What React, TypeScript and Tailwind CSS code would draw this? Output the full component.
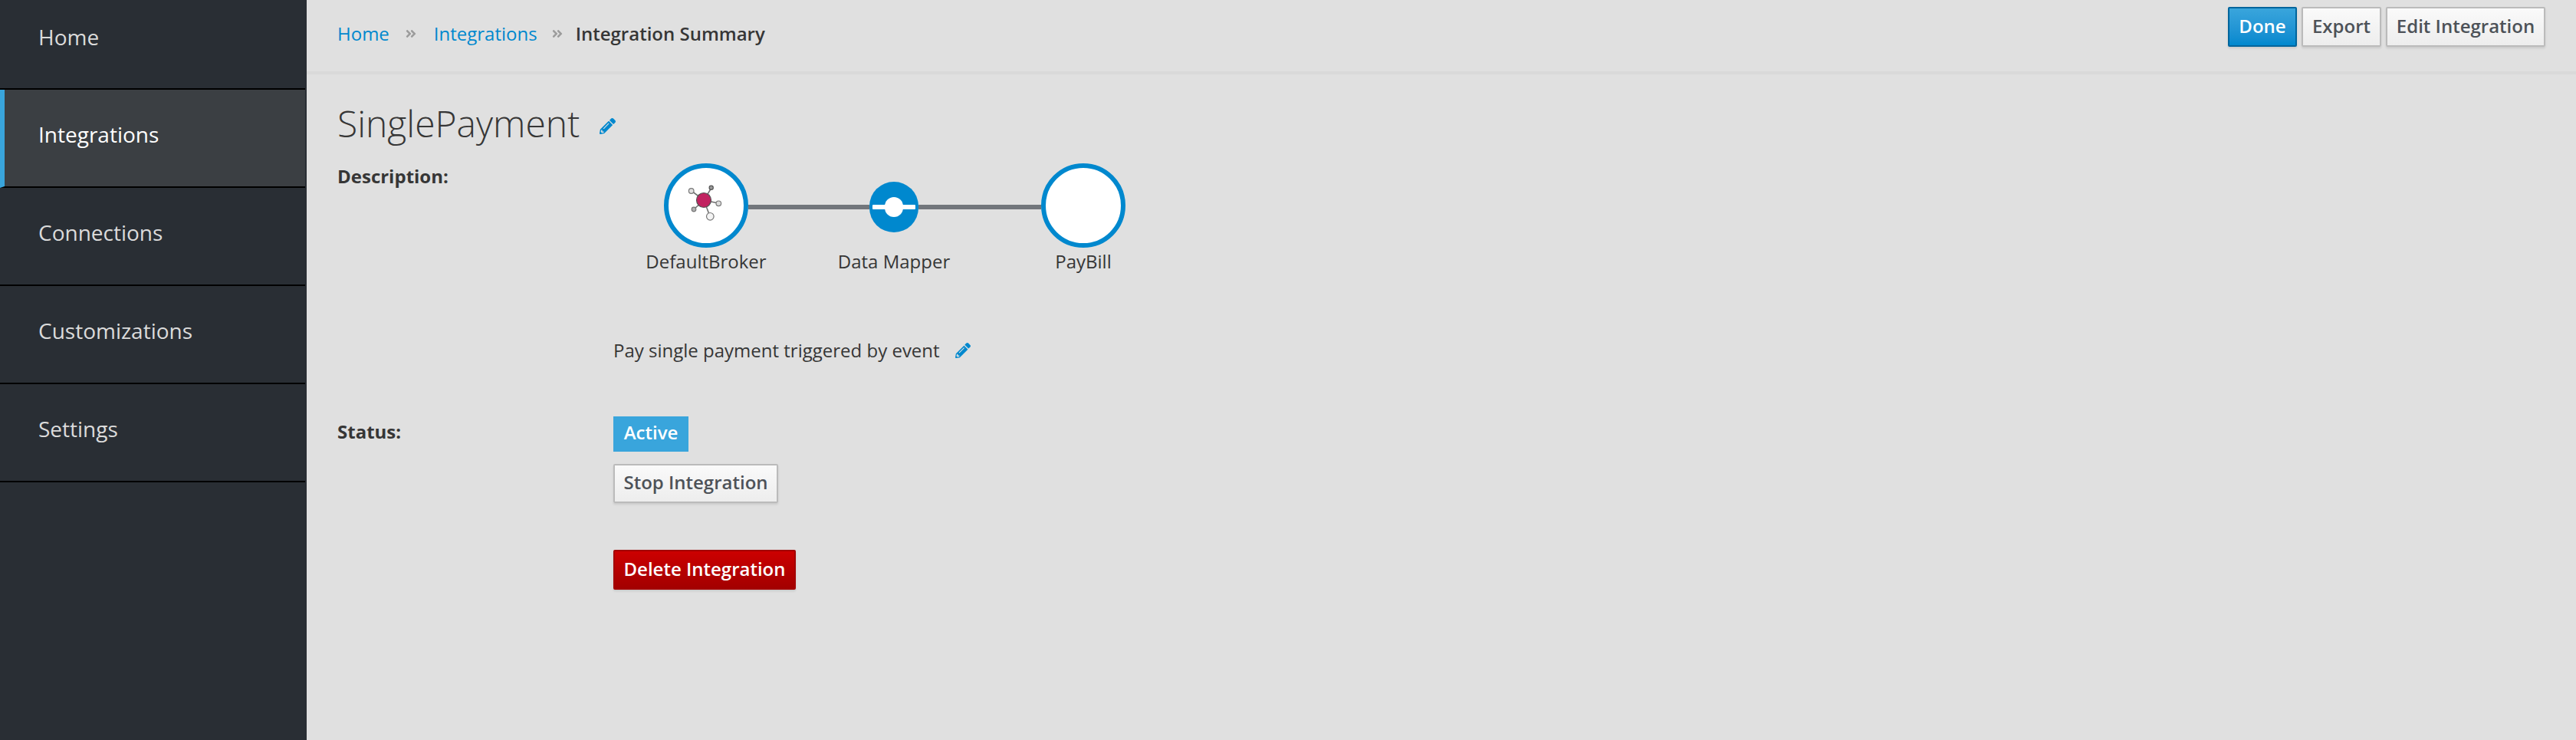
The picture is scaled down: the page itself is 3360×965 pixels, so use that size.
import { FaAngleDoubleRight, FaPencilAlt } from 'react-icons/fa'

const navItems = ['Home', 'Integrations', 'Connections', 'Customizations', 'Settings']

const defaultBtn =
  'rounded-[2px] border-2 border-[#bbbbbb] bg-gradient-to-b from-[#fafafa] to-[#ededed] pb-[3px] text-[#4d5258] shadow-[0_2px_3px_rgba(3,3,3,0.1)]'

function Sidebar() {
  return (
    <aside className="w-[400px] shrink-0 bg-[#292e34] pr-[2px]">
      {navItems.map((item, i) => {
        const active = item === 'Integrations'
        return (
          <div
            key={item}
            className={`flex items-center border-b-2 border-black text-[28px] ${
              i === 0 ? 'h-[117px] pb-[20px]' : 'h-[128px] pb-[10px]'
            } ${
              active
                ? 'border-l-[6px] border-l-[#39a5dc] bg-[#3b3f43] pl-[44px] text-white'
                : 'pl-[50px] text-[#dbdbdb]'
            }`}
          >
            {item}
          </div>
        )
      })}
    </aside>
  )
}

function Breadcrumbs() {
  return (
    <nav className="flex items-center text-[24px]">
      <span className="text-[#0088ce]">Home</span>
      <FaAngleDoubleRight className="ml-[21px] mr-[23px] h-[16px] w-[14px] text-[#9c9c9c]" />
      <span className="text-[#0088ce]">Integrations</span>
      <FaAngleDoubleRight className="ml-[19px] mr-[17px] h-[16px] w-[14px] text-[#9c9c9c]" />
      <span className="font-semibold text-[#363636]">Integration Summary</span>
    </nav>
  )
}

function Molecule() {
  return (
    <svg viewBox="0 0 98 98" className="h-[98px] w-[98px]">
      <g stroke="#6f6f6f" strokeWidth="1.6">
        <line x1="46" y1="42" x2="30" y2="30" />
        <line x1="46" y1="42" x2="56" y2="26" />
        <line x1="46" y1="42" x2="65" y2="46" />
        <line x1="46" y1="42" x2="33" y2="54" />
        <line x1="46" y1="42" x2="54" y2="63" />
      </g>
      <circle cx="29.7" cy="30" r="3.3" fill="#e0e0e0" stroke="#777777" strokeWidth="1.2" />
      <circle cx="55.7" cy="25.7" r="2.6" fill="#9a9a9a" stroke="#555555" strokeWidth="1.2" />
      <circle cx="65.3" cy="46.3" r="3.3" fill="#dddddd" stroke="#777777" strokeWidth="1.2" />
      <circle cx="33" cy="54" r="2.8" fill="#b0b0b0" stroke="#777777" strokeWidth="1.2" />
      <circle cx="54.3" cy="63.3" r="4.8" fill="#f4f4f4" stroke="#777777" strokeWidth="1.2" />
      <circle cx="46" cy="42" r="9.5" fill="#c12260" stroke="#555555" strokeWidth="1.2" />
    </svg>
  )
}

function Flow() {
  const bigCircle =
    'flex h-[110px] w-[110px] items-center justify-center rounded-full border-[6px] border-[#0088ce] bg-white'
  const label = 'mt-[2px] w-max justify-self-center text-[24px] leading-[32px] text-[#363636]'
  return (
    <div className="ml-[66px] grid grid-cols-[110px_158px_64px_160px_110px] items-center">
      <div className={bigCircle}>
        <Molecule />
      </div>
      <div className="mt-[4px] h-[6px] bg-[#72767b]" />
      <div className="relative mt-[4px] flex h-[66px] w-[64px] items-center justify-center rounded-full bg-[#0088ce]">
        <div className="absolute h-[6px] w-[56px] rounded-[1px] bg-white" />
        <div className="h-[26px] w-[24px] rounded-full bg-white" />
      </div>
      <div className="mt-[4px] h-[6px] bg-[#72767b]" />
      <div className={bigCircle} />
      <div className={label}>DefaultBroker</div>
      <div />
      <div className={label}>Data Mapper</div>
      <div />
      <div className={label}>PayBill</div>
    </div>
  )
}

export default function App() {
  return (
    <div
      className="flex min-h-[965px] bg-[#e0e0e0]"
      style={{ fontFamily: '"Open Sans", "Noto Sans", sans-serif' }}
    >
      <Sidebar />
      <main className="min-w-0 flex-1">
        <header className="flex h-[97px] items-start justify-between border-b-4 border-[#d9d9d9] pl-[40px] pr-[40px]">
          <div className="flex h-[88px] items-center">
            <Breadcrumbs />
          </div>
          <div className="mt-[9px] flex gap-[6px] text-[24px] font-semibold">
            <button
              type="button"
              className="h-[52px] w-[90px] rounded-[2px] border-2 border-[#00659c] bg-gradient-to-b from-[#39a5dc] to-[#0088ce] pb-[3px] text-white shadow-[0_2px_3px_rgba(3,3,3,0.1)]"
            >
              Done
            </button>
            <button type="button" className={`h-[52px] w-[104px] ${defaultBtn}`}>
              Export
            </button>
            <button type="button" className={`h-[52px] w-[208px] ${defaultBtn}`}>
              Edit Integration
            </button>
          </div>
        </header>

        <div className="pl-[40px]">
          <div className="mt-[32px] flex h-[64px] items-center">
            <h1 className="text-[48px] font-light text-[#363636]">SinglePayment</h1>
            <FaPencilAlt className="ml-[26px] mt-[6px] h-[21px] w-[21px] text-[#0088ce]" />
          </div>

          <div className="mt-[3px] flex">
            <div className="w-[360px] shrink-0 pt-[18px] text-[24px] font-bold leading-[32px] text-[#363636]">
              Description:
            </div>
            <div>
              <div className="pt-[17px]">
                <Flow />
              </div>
              <div className="mt-[84px] flex h-[32px] items-center text-[24px] text-[#363636]">
                Pay single payment triggered by event
                <FaPencilAlt className="ml-[20px] h-[20px] w-[20px] text-[#0088ce]" />
              </div>
            </div>
          </div>

          <div className="mt-[70px] flex">
            <div className="flex h-[46px] w-[360px] shrink-0 items-center pb-[6px] text-[24px] font-bold text-[#363636]">
              Status:
            </div>
            <div className="flex flex-col items-start text-[24px] font-semibold">
              <span className="flex h-[46px] w-[98px] items-center justify-center bg-[#39a5dc] pb-[5px] text-white">
                Active
              </span>
              <button type="button" className={`mt-[16px] h-[51px] w-[215px] ${defaultBtn}`}>
                Stop Integration
              </button>
              <button
                type="button"
                className="mt-[61px] h-[52px] w-[238px] rounded-[2px] border-2 border-[#a30000] bg-gradient-to-b from-[#cc0000] to-[#a30000] pb-[3px] text-white shadow-[0_2px_3px_rgba(3,3,3,0.1)]"
              >
                Delete Integration
              </button>
            </div>
          </div>
        </div>
      </main>
    </div>
  )
}
